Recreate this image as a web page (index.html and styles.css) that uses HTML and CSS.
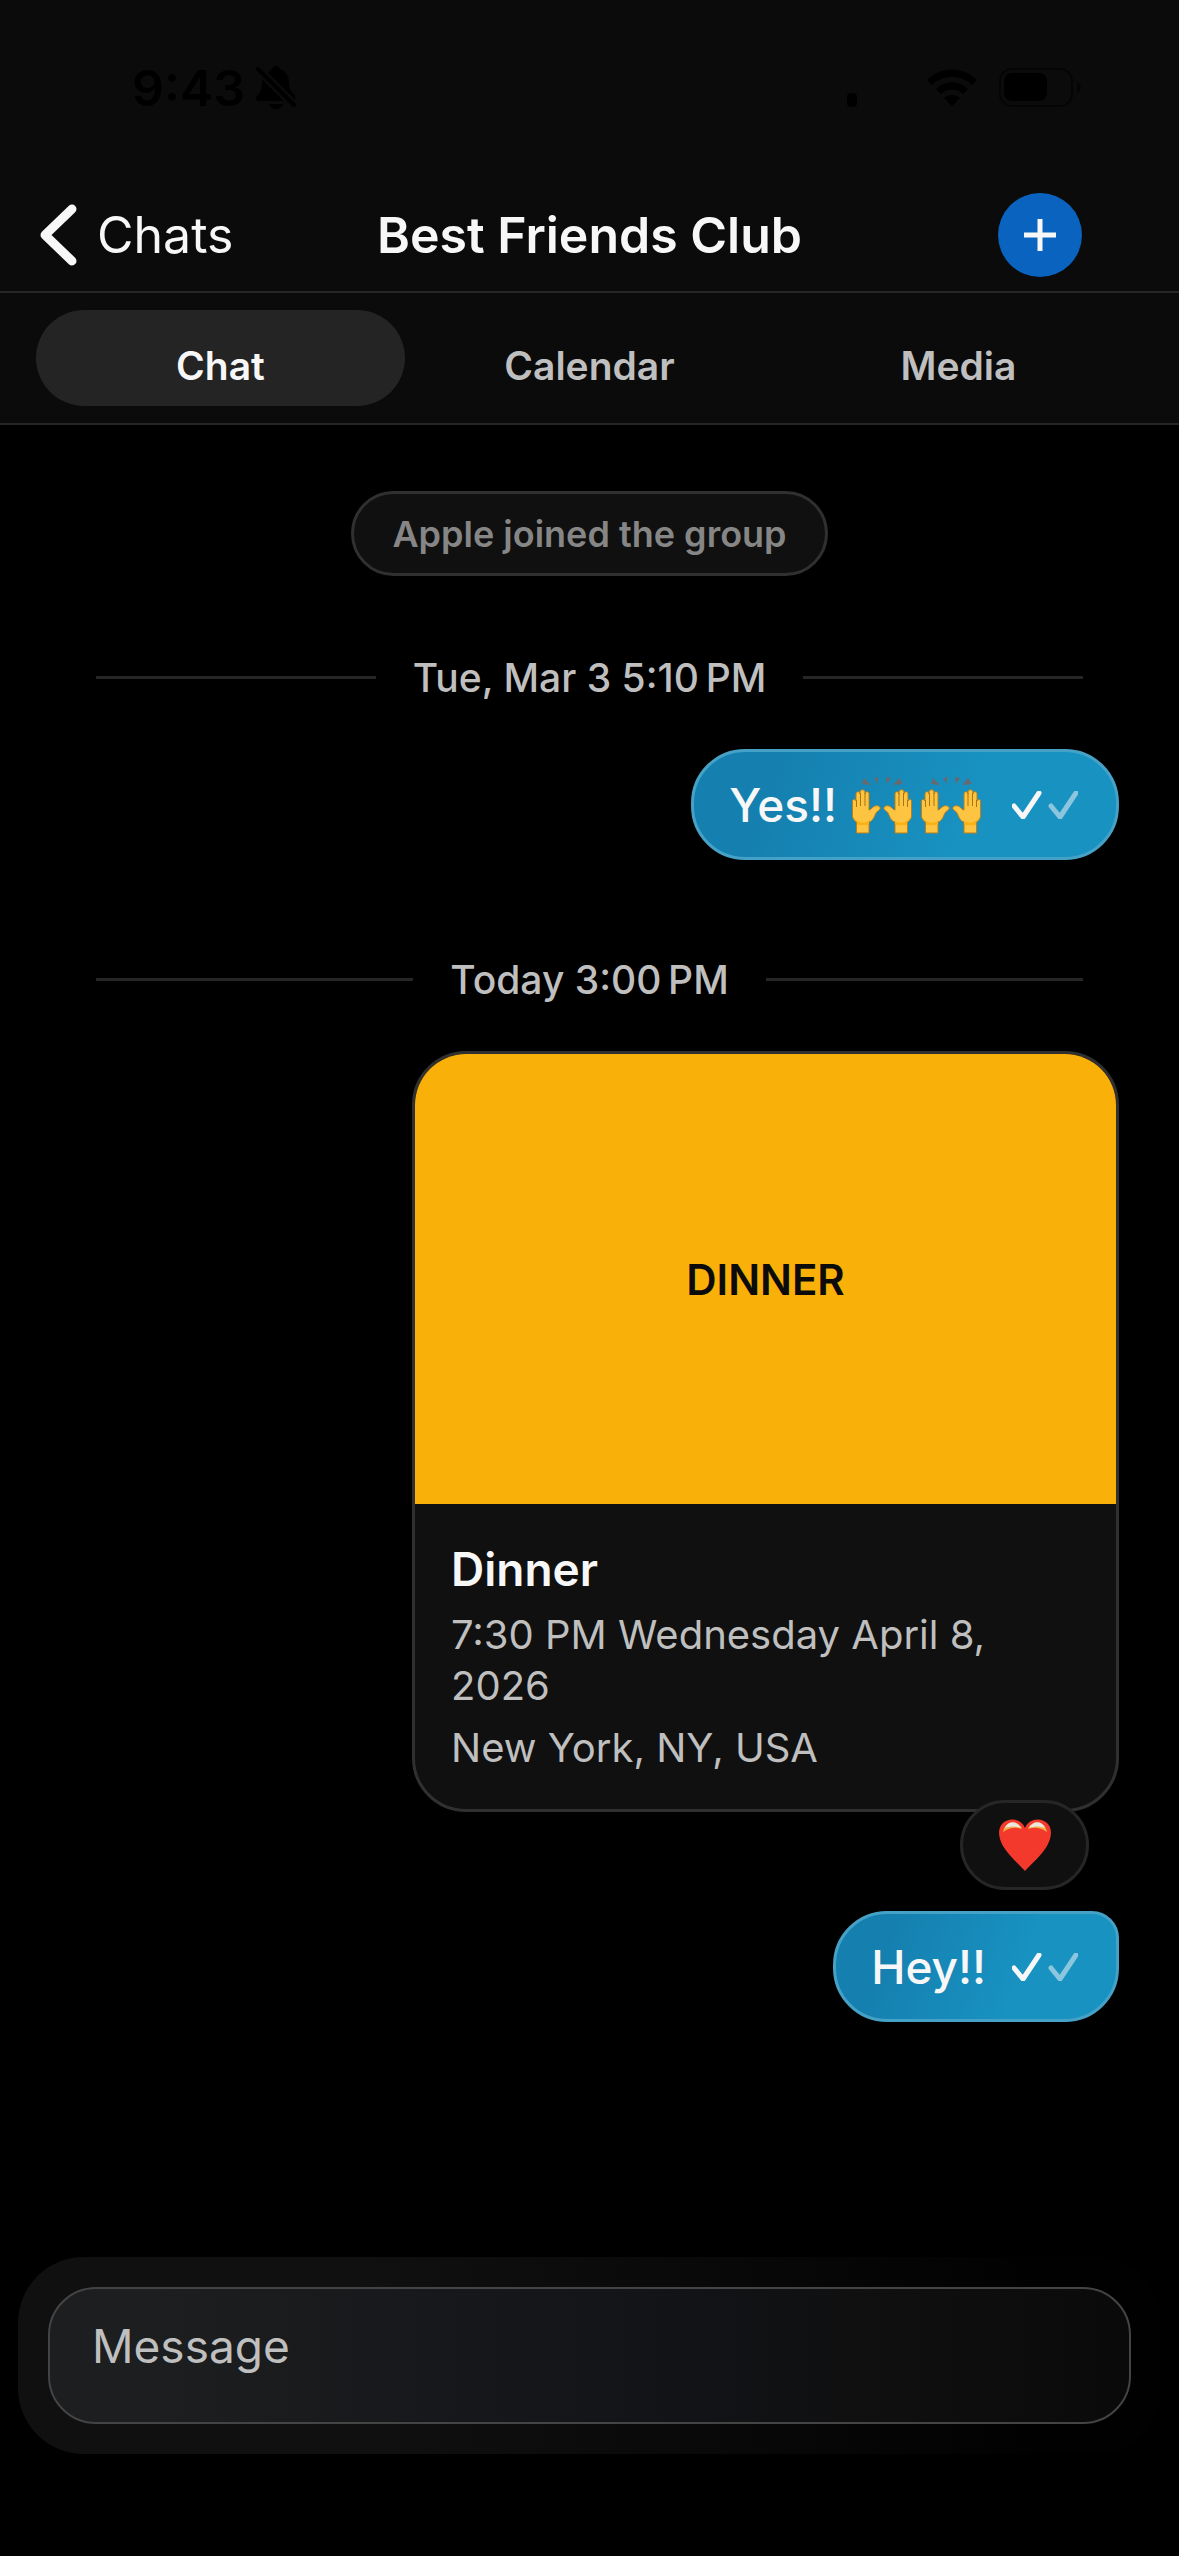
FILE: index.html
```html
<!DOCTYPE html>
<html lang="en">
<head>
<meta charset="utf-8">
<meta name="viewport" content="width=device-width, initial-scale=1">
<title>Best Friends Club</title>
<link rel="stylesheet" href="styles.css">
</head>
<body>
<svg class="sprite" aria-hidden="true">
  <symbol id="checks" viewBox="0 0 66 28">
    <path d="M2 15l9 11L27 2" fill="none" stroke="#f7f7f7" stroke-width="5" stroke-linecap="round" stroke-linejoin="round"/>
    <path d="M39 15l9 11L64 2" fill="none" stroke="#8cc5de" stroke-width="5" stroke-linecap="round" stroke-linejoin="round"/>
  </symbol>
  <symbol id="raised-hands" viewBox="0 0 60 58">
    <defs>
      <g id="hand">
        <path d="M.5 28V12c0-2 3-2 3.500 0V5c0-3 4-3 4 0V3c0-3 5-3 5 0v2c0-3 4-3 4 0v16c2 0 3-3 6-4 3-1 6 1 5 3-1 2-3 2-4 4-2 4-3 8-7 9v11H4.500V33c-2-1-3-3-4-5z" fill="#fcc441" stroke="#b97f1b" stroke-width="1"/>
        <path d="M4.500 11v7M8.500 4v13M13 4v13" fill="none" stroke="#a87416" stroke-width="1"/>
        <path d="M2 29c4 5 10 6 15 3v3l-1 1H5v-3z" fill="#fbb112"/>
      </g>
    </defs>
    <path d="M10 8l2-6 7 7zM22 2l4-1v7zM34 1l5 1-4 6zM41 9l6-7 4 6z" fill="#666a70"/>
    <use href="#hand" transform="translate(0 13)"/>
    <use href="#hand" transform="matrix(-1 0 0 1 60 13)"/>
  </symbol>
</svg>
<div class="app">
  <header class="top">
    <div class="status">
      <div class="status-side">
        <span>9:43</span>
        <svg width="40" height="44" viewBox="0 0 40 44" aria-label="Silent mode">
          <path d="M12 7C13 5 15 4 16 3c1-4 7-4 8 0 7 3 9 8 9 14 0 6 2 9 6 12v6H2c-3-1-2-4 0-6 3-3 4-7 4-13 0-4 2-7 6-9zM13 38h14c-2 7-12 7-14 0z"/>
          <path d="M-1 0l42 42" stroke="#0b0b0b" stroke-width="9"/>
          <path d="M2 3l36 36" stroke="#000" stroke-width="4" stroke-linecap="round"/>
        </svg>
      </div>
      <div class="status-side">
        <svg class="signal" width="10" height="40" viewBox="0 0 10 40"><rect y="25" width="10" height="14" rx="4"/></svg>
        <svg class="wifi" width="52" height="40" viewBox="0 0 52 40" aria-label="Wi-Fi">
          <path d="M1 12c14-14 36-14 50 0l-5 5c-11-11-29-11-40 0zM10 21c9-9 23-9 32 0l-5 5c-6-6-16-6-22 0zM18 30c5-4 11-4 16 0l-8 8z"/>
        </svg>
        <svg width="82" height="40" viewBox="0 0 82 40" aria-label="Battery">
          <rect x="1" y="1" width="72" height="37" rx="12" fill="none" stroke="#050505" stroke-width="2"/>
          <rect x="5" y="5" width="43" height="28" rx="8"/>
          <path d="M78 14c5 2 5 9 0 11z" fill="#050505"/>
        </svg>
      </div>
    </div>
    <div class="nav">
      <a class="back" href="#chats">
        <svg width="38" height="62" viewBox="0 0 38 62" aria-hidden="true"><path d="M33 5L6 31l27 26" fill="none" stroke="#f7f7f7" stroke-width="9" stroke-linecap="round" stroke-linejoin="round"/></svg>
        <span>Chats</span>
      </a>
      <h1 class="title">Best Friends Club</h1>
      <button class="add" type="button" aria-label="Add">
        <svg width="32" height="32" viewBox="0 0 32 32" aria-hidden="true"><path d="M16 0v32M0 16h32" stroke="#f7f7f7" stroke-width="5"/></svg>
      </button>
    </div>
    <nav class="tabs">
      <button class="tab tab-active" type="button">Chat</button>
      <button class="tab" type="button">Calendar</button>
      <button class="tab" type="button">Media</button>
    </nav>
  </header>
  <main class="thread">
    <p class="notice">Apple joined the group</p>
    <div class="day"><span>Tue, Mar 3 5:10&#8239;PM</span></div>
    <div class="bubble">
      <span>Yes!!</span>
      <span class="emoji" role="img" aria-label="Raised hands, twice">
        <svg width="60" height="58"><use href="#raised-hands"/></svg>
        <svg width="60" height="58"><use href="#raised-hands"/></svg>
      </span>
      <svg class="checks" width="66" height="28" aria-label="Delivered"><use href="#checks"/></svg>
    </div>
    <div class="day day-later"><span>Today 3:00&#8239;PM</span></div>
    <article class="card">
      <div class="cover">DINNER</div>
      <div class="details">
        <h2 class="event">Dinner</h2>
        <p>7:30 PM Wednesday April 8, 2026</p>
        <p>New York, NY, USA</p>
      </div>
      <button class="reaction" type="button" aria-label="Heart reaction">
        <svg width="52" height="52" viewBox="0 0 52 52" aria-hidden="true">
          <path d="M26 9C22-1 9-2 3 5-2 11 0 20 4 27c5 9 15 17 22 25 7-8 17-16 22-25 4-7 6-16 1-22-6-7-19-6-23 4z" fill="#f2392c"/>
          <path d="M4 13C6 1 20 1 23 10c-6-2-12-2-19 3zM29 10C32 1 46 1 48 13c-7-5-13-5-19-3z" fill="#f2b04a"/>
          <path d="M6 9c4-8 12-7 16 0-6-2-10-2-16 0zM30 9c4-7 12-8 16 0-6-2-10-2-16 0z" fill="#ebe6e2"/>
        </svg>
      </button>
    </article>
    <div class="bubble bubble-last">
      <span>Hey!!</span>
      <svg class="checks" width="66" height="28" aria-label="Delivered"><use href="#checks"/></svg>
    </div>
  </main>
  <form class="composer">
    <textarea class="message" rows="1" placeholder="Message" aria-label="Message"></textarea>
  </form>
</div>
</body>
</html>
```
FILE: styles.css
```css
* { box-sizing: border-box; }
body {
  margin: 0;
  background: #000;
  color: #f7f7f7;
  font-family: Inter, "Liberation Sans", sans-serif;
}
h1, h2, p { margin: 0; font: inherit; }
button, textarea { font: inherit; color: inherit; border: 0; background: none; }
svg { display: block; flex: none; }
.sprite { position: absolute; width: 0; height: 0; }
.app {
  min-height: 100vh;
  display: flex;
  flex-direction: column;
}
.top { background: #0b0b0b; border-bottom: 2px solid #262626; }
.status {
  display: flex;
  justify-content: space-between;
  padding: 58px 98px 0 132px;
  height: 176px;
  color: #000;
  font-size: 50px;
  font-weight: 600;
  line-height: 60px;
}
.status-side { display: flex; align-items: center; gap: 11px; height: 60px; }
.signal { margin-right: 58px; }
.wifi { margin-right: 10px; }
.nav {
  display: grid;
  grid-template-columns: 1fr auto 1fr;
  align-items: center;
  height: 117px;
  padding: 2px 39px 0;
  border-bottom: 2px solid #262626;
  font-size: 50px;
  line-height: 62px;
}
.back { display: flex; align-items: center; gap: 20px; color: inherit; text-decoration: none; }
.title { font-weight: 600; }
.add {
  justify-self: end;
  display: grid;
  place-items: center;
  width: 84px;
  height: 84px;
  margin-right: 58px;
  padding: 0;
  border-radius: 50%;
  background: #0a64bf;
}
.tabs { display: flex; padding: 17px 36px; }
.tab {
  flex: 1;
  height: 96px;
  padding: 16px 0 0;
  border-radius: 48px;
  color: #bfbfbf;
  font-size: 39px;
  font-weight: 600;
  line-height: 48px;
}
.tab-active { background: #242424; color: #f7f7f7; }
.thread {
  flex: 1;
  display: flex;
  flex-direction: column;
  align-items: flex-end;
  padding: 66px 60px 0;
}
.notice {
  align-self: center;
  padding: 19px 38px 17px;
  border: 3px solid #303030;
  border-radius: 43px;
  background: #101010;
  color: #868686;
  font-size: 36px;
  font-weight: 600;
  line-height: 43px;
}
.day {
  align-self: stretch;
  display: flex;
  align-items: center;
  gap: 37px;
  margin: 76px 36px 47px;
  color: #bfbfbf;
  font-size: 39px;
  font-weight: 500;
  line-height: 48px;
}
.day-later { margin-top: 94px; }
.day span { padding-top: 2px; }
.day::before, .day::after { content: ""; flex: 1; height: 3px; background: #262626; }
.bubble {
  display: flex;
  align-items: center;
  height: 111px;
  padding: 0 38px 0 35px;
  border: 3px solid #46a1c6;
  border-radius: 54px;
  background: linear-gradient(110deg, #1580b0 20%, #1892c1 65%);
  font-size: 46px;
  font-weight: 500;
  line-height: 58px;
}
.emoji { display: flex; gap: 9px; margin: 0 5px 0 15px; }
.checks { margin-left: 26px; }
.card {
  position: relative;
  width: 707px;
  max-width: 100%;
  border: 3px solid #303030;
  border-radius: 54px;
  background: #101010;
}
.cover {
  display: grid;
  place-items: center;
  height: 450px;
  border-radius: 51px 51px 0 0;
  background: #f9b009;
  color: #0b0b0b;
  font-size: 42px;
  font-weight: 600;
}
.details {
  display: grid;
  gap: 11px;
  padding: 36px;
  color: #bfbfbf;
  font-size: 40px;
  line-height: 51px;
}
.event { color: #f7f7f7; font-size: 46px; font-weight: 600; line-height: 58px; }
.reaction {
  position: absolute;
  right: 27px;
  bottom: -81px;
  display: grid;
  place-items: center;
  width: 129px;
  height: 90px;
  border: 3px solid #262626;
  border-radius: 45px;
  background: #101010;
}
.bubble-last { margin-top: 99px; border-top-right-radius: 27px; }
.composer {
  margin: 0 18px 102px;
  padding: 30px;
  border-radius: 66px;
  background: linear-gradient(90deg, #101010 30%, #0a0a0a 55%, #010101 90%);
}
.message {
  display: block;
  width: 100%;
  height: 137px;
  padding: 28px 42px;
  border: 2px solid #444;
  border-radius: 48px;
  background: linear-gradient(90deg, #1d1e1f 10%, #17181b 35%, #121418 55%, #0f0f0f 78%, #0a0a0a);
  font-size: 46px;
  line-height: 58px;
  resize: none;
  outline: 0;
}
.message::placeholder { color: #bfbfbf; opacity: 1; }
```
